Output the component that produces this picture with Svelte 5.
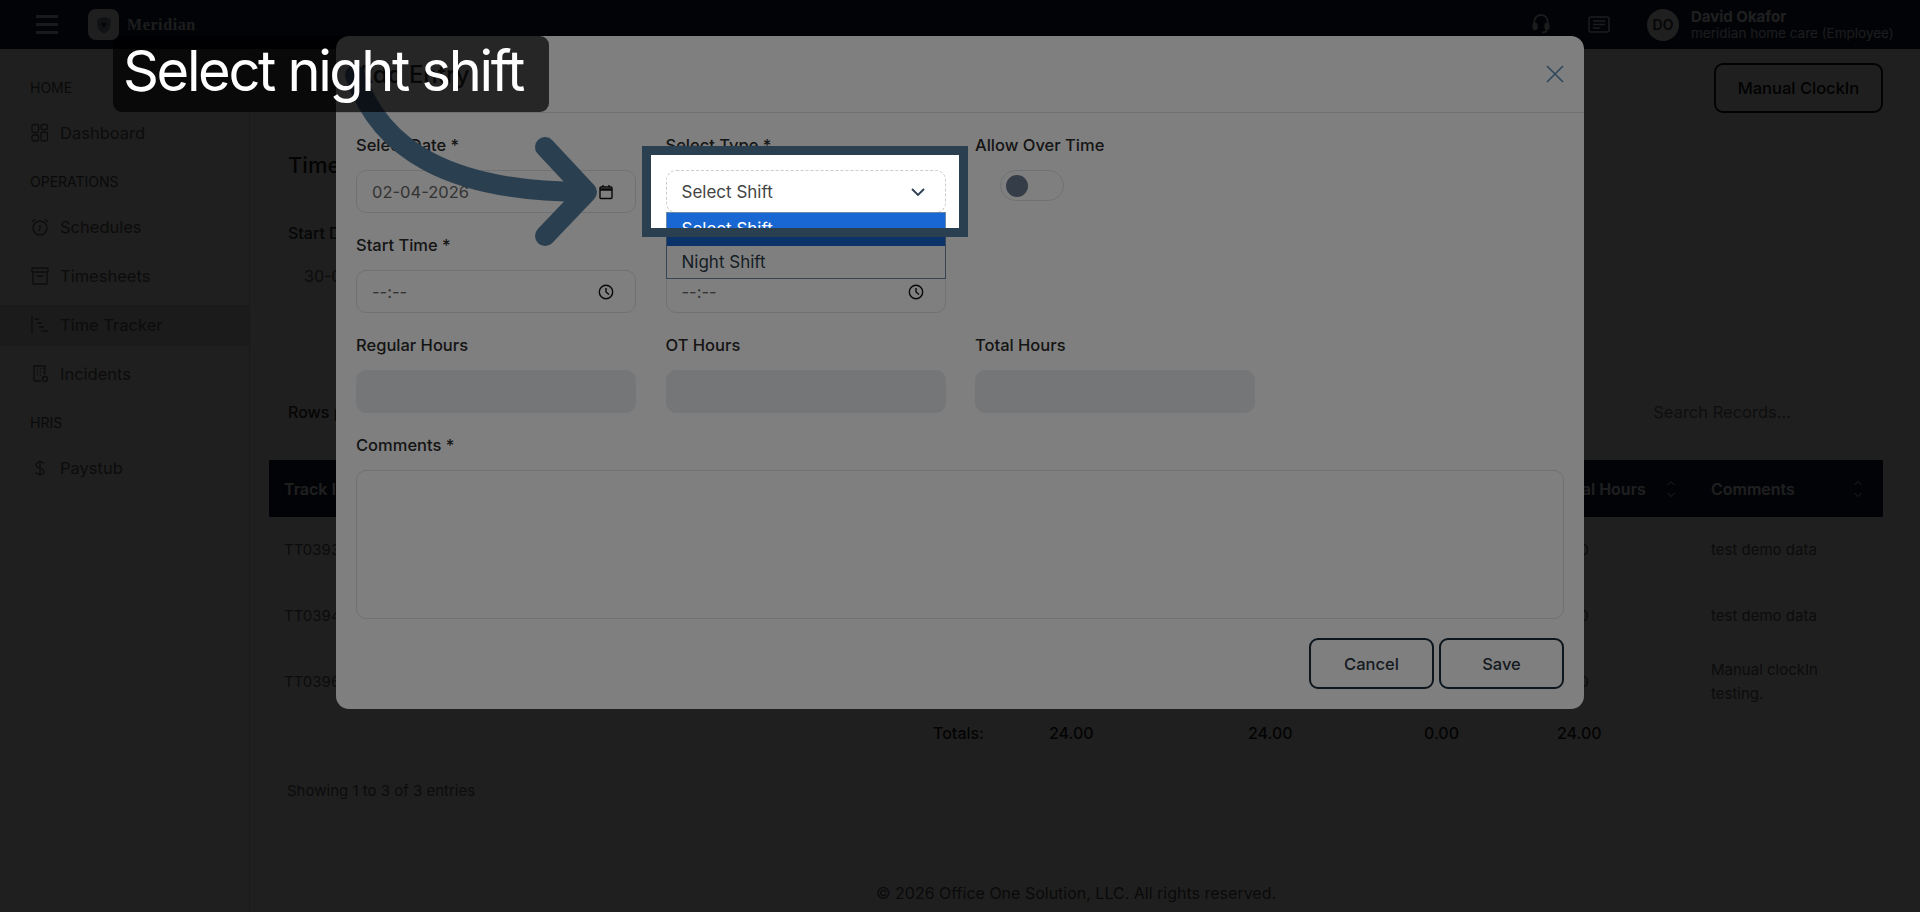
<script>
  const sections = [
    { title: 'HOME', items: [{ name: 'Dashboard', icon: 'dash' }] },
    { title: 'OPERATIONS', items: [
      { name: 'Schedules', icon: 'alarm' },
      { name: 'Timesheets', icon: 'box' },
      { name: 'Time Tracker', icon: 'gantt', active: true },
      { name: 'Incidents', icon: 'building' }
    ] },
    { title: 'HRIS', items: [{ name: 'Paystub', icon: 'dollar' }] }
  ];
  const columns = ['Track ID', 'Date', 'Start Time', 'End Time', 'Hours', 'Regular Hours', 'OT Hours', 'Total Hours', 'Comments'];
  const rows = [
    { id: 'TT0393', total: '8.00', comment: 'test demo data' },
    { id: 'TT0394', total: '8.00', comment: 'test demo data' },
    { id: 'TT0396', total: '8.00', comment: 'Manual clockIn testing.' }
  ];
</script>

<div class="shell">
  <header class="topbar">
    <div class="burger"><span></span><span></span><span></span></div>
    <div class="logo">
      <svg viewBox="0 0 24 24" width="20" height="22"><path d="M12 2l8 3v7c0 5-3.500 8-8 10-4.500-2-8-5-8-10V5z" fill="#8a93a8"/><path d="M12 15l-3-3a2 2 0 0 1 3-2.500 2 2 0 0 1 3 2.500z" fill="#2a3450"/></svg>
    </div>
    <span class="brand">Meridian</span>
    <div class="top-right">
      <svg class="headset" viewBox="0 0 18 22" width="18" height="21" fill="none" stroke="#e6e6e6" stroke-width="1.800"><path d="M2 12V8a7 7 0 0 1 14 0v4"/><rect x="1" y="10" width="3.500" height="6" rx="1.500" fill="#e6e6e6"/><rect x="13.500" y="10" width="3.500" height="6" rx="1.500" fill="#e6e6e6"/><path d="M15 16c0 2.500-2 3.500-5 3.500"/></svg>
      <svg class="msg" viewBox="0 0 22 17" width="22" height="17" fill="none" stroke="#e6e6e6" stroke-width="1.500"><rect x="1" y="1" width="20" height="15" rx="2"/><path d="M5 5h12M5 8.500h12M5 12h7"/></svg>
      <div class="avatar">DO</div>
      <div class="who"><strong>David Okafor</strong><small>meridian home care (Employee)</small></div>
    </div>
  </header>

  <div class="layout">
    <aside class="sidebar">
      {#each sections as s}
        <div class="sec-title">{s.title}</div>
        {#each s.items as it}
          <div class="nav" class:active={it.active}>
            <svg viewBox="0 0 20 20" width="20" height="20" fill="none" stroke="#666" stroke-width="1.300">
              {#if it.icon === 'dash'}
                <rect x="2" y="1.500" width="6.500" height="8" rx="1.500"/><rect x="11" y="1.500" width="6.500" height="5" rx="1.500"/><rect x="2" y="12" width="6.500" height="6" rx="1.500"/><rect x="11" y="9" width="6.500" height="9" rx="1.500"/>
              {:else if it.icon === 'alarm'}
                <circle cx="10" cy="11" r="7"/><path d="M10 8v3l-1 3M2 5l3-3M18 5l-3-3"/>
              {:else if it.icon === 'box'}
                <path d="M2 2h16v4H2zM3 6v12h14V6M7 10h6"/>
              {:else if it.icon === 'gantt'}
                <path d="M2 1v18M5 4h4M7 8h5M9 12h5M11 16h7"/>
              {:else if it.icon === 'building'}
                <path d="M4 17V2h11v9M4 17h7M7 5h1M10 5h1M13 5h1M7 8h1M10 8h1M13 8h1M7 11h1M10 11h1"/><circle cx="15" cy="15" r="2.500"/>
              {:else}
                <path d="M14 5.500C13 3.500 6 3.500 6 7c0 4 8 2.500 8 6.500 0 3.500-7 3.500-8.500 1M10 2v16"/>
              {/if}
            </svg>
            <span>{it.name}</span>
          </div>
        {/each}
      {/each}
    </aside>

    <main class="main">
      <div class="actions"><button class="clock">Manual ClockIn</button></div>
      <h2>Time Tracker</h2>
      <div class="filter-label">Start Date</div>
      <div class="filter-value">30-01-2026</div>
      <div class="toolbar"><span class="rows-label">Rows per page</span><span class="search">Search Records...</span></div>
      <table>
        <colgroup>
          <col style="width:211px"/><col style="width:220px"/><col style="width:218px"/><col style="width:116px"/>
          <col style="width:199px"/><col style="width:176px"/><col style="width:133px"/><col style="width:154px"/><col style="width:187px"/>
        </colgroup>
        <thead>
          <tr>
            {#each columns as c}
              <th><div class="th"><span>{c}</span><svg viewBox="0 0 10 20" width="10" height="20" fill="none" stroke="#fff" stroke-width="1"><path d="M1.500 6L5 2.500 8.500 6M1.500 14L5 17.500 8.500 14"/></svg></div></th>
            {/each}
          </tr>
        </thead>
        <tbody>
          {#each rows as r}
            <tr>
              <td>{r.id}</td><td></td><td></td><td></td><td></td><td></td><td></td>
              <td>{r.total}</td><td>{r.comment}</td>
            </tr>
          {/each}
          <tr class="totals">
            <td></td><td></td><td></td><td>Totals:</td><td>24.00</td><td>24.00</td><td>0.00</td><td>24.00</td><td></td>
          </tr>
        </tbody>
      </table>
      <div class="showing">Showing 1 to 3 of 3 entries</div>
      <footer>© 2026 Office One Solution, LLC. All rights reserved.</footer>
    </main>
  </div>

  <div class="backdrop"></div>

  <section class="modal">
    <div class="modal-head">
      <span class="title">Add Entry</span>
      <svg viewBox="0 0 20 20" width="20" height="20" fill="none" stroke="#5f8fb5" stroke-width="1.700"><path d="M2 2l16 16M18 2L2 18"/></svg>
    </div>
    <div class="modal-body">
      <div class="form">
        <div class="field">
          <label>Select Date *</label>
          <div class="input"><span>02-04-2026</span>
            <svg viewBox="0 0 16 16" width="16" height="16" fill="none" stroke="#111" stroke-width="1.400"><rect x="2" y="3" width="12" height="11.500" rx="1"/><path d="M2 5.500h12" stroke-width="2.500"/><path d="M5 1v2M11 1v2"/></svg>
          </div>
        </div>
        <div class="field select-field">
          <label>Select Type *</label>
          <div class="select"><span>Select Shift</span>
            <svg viewBox="0 0 14 8" width="14" height="8" fill="none" stroke="#2c3e50" stroke-width="1.800"><path d="M1 1l6 6 6-6"/></svg>
          </div>
          <div class="dropdown">
            <div class="opt on">Select Shift</div>
            <div class="opt">Night Shift</div>
          </div>
        </div>
        <div class="field">
          <label>Allow Over Time</label>
          <div class="switch"><i></i></div>
        </div>
        <div></div>

        <div class="field">
          <label>Start Time *</label>
          <div class="input"><span>--:--</span>
            <svg viewBox="0 0 16 16" width="16" height="16" fill="none" stroke="#111" stroke-width="1.400"><circle cx="8" cy="8" r="6.700"/><path d="M8 4v4l3 2.500"/></svg>
          </div>
        </div>
        <div class="field">
          <label>End Time *</label>
          <div class="input"><span>--:--</span>
            <svg viewBox="0 0 16 16" width="16" height="16" fill="none" stroke="#111" stroke-width="1.400"><circle cx="8" cy="8" r="6.700"/><path d="M8 4v4l3 2.500"/></svg>
          </div>
        </div>
        <div></div><div></div>

        <div class="field"><label>Regular Hours</label><div class="input off"></div></div>
        <div class="field"><label>OT Hours</label><div class="input off"></div></div>
        <div class="field"><label>Total Hours</label><div class="input off"></div></div>
        <div></div>
      </div>
      <label>Comments *</label>
      <div class="textarea"></div>
      <div class="btns"><button>Cancel</button><button>Save</button></div>
    </div>
  </section>

  <div class="spot"></div>

  <svg class="arrow" viewBox="0 0 1920 912" width="1920" height="912" fill="none" stroke="#2a3f50" stroke-width="20" stroke-linecap="round" stroke-linejoin="round">
    <path d="M355 75C380 150 450 192 585 192"/>
    <path d="M545 147L587 192 545 236"/>
  </svg>

  <div class="caption">Select night shift</div>
</div>

<style>
  :global(body) { margin: 0; overflow: hidden; }
  .shell { position: relative; width: 1920px; height: 912px; overflow: hidden; background: #fff; font-family: Inter, "Liberation Sans", sans-serif; color: #444; font-size: 16px; }

  .topbar { height: 49px; background: #161c40; display: flex; align-items: center; box-sizing: border-box; padding-left: 36px; color: #fff; }
  .burger { width: 22px; display: flex; flex-direction: column; gap: 5px; margin-right: 30px; }
  .burger span { height: 3px; background: #c9ccd6; }
  .logo { width: 31px; height: 31px; border-radius: 8px; background: #fff; display: flex; align-items: center; justify-content: center; margin-right: 8px; }
  .brand { font-family: "Liberation Serif", serif; font-weight: 700; font-size: 16px; letter-spacing: .6px; color: #e8e8e8; }
  .top-right { margin-left: auto; display: flex; align-items: center; padding-right: 32px; }
  .headset { margin-right: 38px; }
  .msg { margin-right: 37px; }
  .avatar { width: 32px; height: 32px; border-radius: 50%; background: #fff; color: #333; font-size: 14px; font-weight: 600; display: flex; align-items: center; justify-content: center; margin-right: 12px; }
  .who { display: flex; flex-direction: column; line-height: 16px; width: 197px; }
  .who strong { font-size: 15px; font-weight: 700; color: #fff; }
  .who small { font-size: 13.500px; color: #e4e4e4; white-space: nowrap; }

  .layout { display: flex; height: 863px; }
  .sidebar { width: 250px; flex: none; box-sizing: border-box; border-right: 1px solid #cfcfcf; padding-top: 28px; }
  .sec-title { padding-left: 30px; font-size: 14px; line-height: 22px; color: #555; margin-bottom: 13.500px; }
  .nav + .sec-title { margin-top: 17.500px; }
  .nav { height: 41px; margin-top: 8px; display: flex; align-items: center; gap: 10px; padding-left: 30px; color: #666; font-size: 16.500px; }
  .nav.active { background: #dcdcdc; }

  .main { flex: 1; min-width: 0; box-sizing: border-box; padding: 14px 37px 0 19px; }
  .actions { display: flex; justify-content: flex-end; margin-bottom: 38px; }
  .clock { width: 169px; height: 50px; background: none; border: 2px solid #111; border-radius: 9px; font: 500 16.500px Inter, sans-serif; color: #111; }
  h2 { margin: 0 0 42px 19px; font-size: 22px; line-height: 28px; font-weight: 500; color: #222; }
  .filter-label { margin-left: 19px; line-height: 24px; font-weight: 500; color: #333; margin-bottom: 19px; }
  .filter-value { margin-left: 35px; line-height: 24px; color: #666; }
  .toolbar { display: flex; justify-content: space-between; margin: 112px 92px 36px 19px; line-height: 24px; }
  .rows-label { font-weight: 500; color: #333; }
  .search { color: #777; font-size: 16.500px; }

  table { width: 1614px; table-layout: fixed; border-collapse: collapse; font-size: 15px; color: #666; }
  th { height: 57px; background: #161c40; color: #fff; padding: 0 20px 0 15px; text-align: left; font-weight: 600; font-size: 16px; box-sizing: border-box; }
  .th { display: flex; align-items: center; justify-content: space-between; white-space: nowrap; }
  td { height: 66px; padding: 0 15px; box-sizing: border-box; line-height: 24px; }
  .totals td { height: 36px; color: #222; font-weight: 500; font-size: 16px; }
  .showing { margin: 28px 0 0 18px; line-height: 24px; font-size: 15px; color: #666; }
  footer { margin-top: 78px; line-height: 24px; text-align: center; color: #555; font-size: 16px; }

  .backdrop { position: absolute; inset: 0; background: rgba(0, 0, 0, .757); }

  .modal { position: absolute; z-index: 1; left: 336px; top: 36px; width: 1248px; height: 673px; background: #fff; border-radius: 13px; }
  .modal-head { height: 76px; border-bottom: 1px solid #dee2e6; display: flex; align-items: center; justify-content: space-between; padding: 0 19px 0 20px; }
  .title { font-size: 24px; font-weight: 500; color: #333; }
  .modal-body { padding: 22px 20px 0; }
  .form { display: grid; grid-template-columns: repeat(4, 280px); column-gap: 29.500px; row-gap: 22px; margin-bottom: 22px; }
  .field { position: relative; }
  label { display: block; height: 20px; line-height: 20px; margin-bottom: 15px; font-size: 16.500px; font-weight: 500; color: #2a2a2a; }
  .input { height: 43px; box-sizing: border-box; border: 1px solid #dee2e6; border-radius: 10px; display: flex; align-items: center; justify-content: space-between; padding: 0 21px 0 15px; font-size: 16.500px; color: #666; }
  .input.off { background: #e9ecef; border-color: #e9ecef; }
  .select { height: 43px; box-sizing: border-box; border: 1px dashed #ccc; border-radius: 10px; display: flex; align-items: center; justify-content: space-between; padding: 0 20px 0 15px; font-size: 17px; color: #444; background: #fff; }
  .dropdown { position: absolute; z-index: 1; left: 0; right: 0; top: 77px; box-sizing: border-box; border: 1px solid #6a8aa8; background: #fff; font-size: 17px; color: #2a3a4a; }
  .opt { height: 32.500px; line-height: 32.500px; padding-left: 15px; }
  .opt.on { background: #1967d2; color: #fff; }
  .switch { width: 64px; height: 31px; margin: 4px 0 0 25px; box-sizing: border-box; border: 1px solid #dee2e6; border-radius: 16px; position: relative; }
  .switch i { position: absolute; left: 5px; top: 3.500px; width: 22px; height: 22px; border-radius: 50%; background: #6a7c90; }
  .textarea { height: 149px; box-sizing: border-box; border: 1px solid #dee2e6; border-radius: 10px; }
  .btns { display: flex; justify-content: flex-end; gap: 5px; margin-top: 19px; }
  .btns button { width: 125px; height: 51px; background: none; border: 2px solid #1b2b3a; border-radius: 9px; font: 500 16.500px Inter, sans-serif; color: #2a3540; }

  .spot { position: absolute; z-index: 2; left: 642px; top: 146px; width: 326px; height: 91px; box-sizing: border-box; border: 9.500px solid #2a3f50; box-shadow: 0 0 0 2000px rgba(0, 0, 0, .5); }
  .arrow { position: absolute; z-index: 3; left: 0; top: 0; }
  .caption { position: absolute; z-index: 4; left: 113px; top: 36px; width: 436px; height: 76px; box-sizing: border-box; padding-left: 10px; border-radius: 9px; background: rgba(0, 0, 0, .7); color: #fff; font-size: 56px; line-height: 70px; letter-spacing: -2.350px; white-space: nowrap; }
</style>
